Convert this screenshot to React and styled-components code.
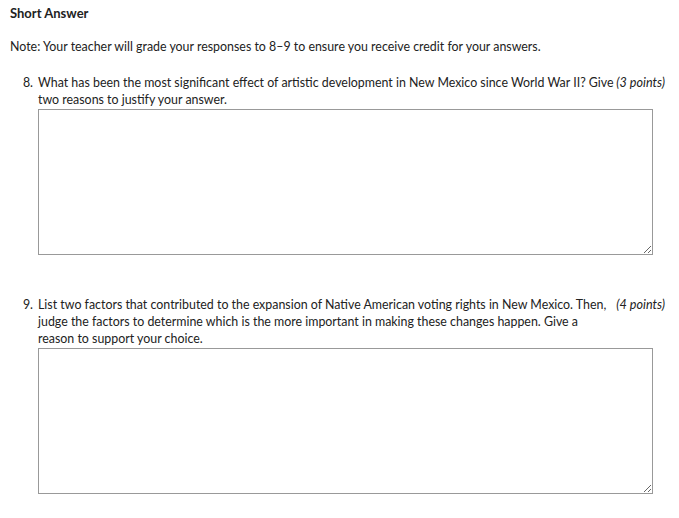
import styled, { createGlobalStyle } from 'styled-components'

const GlobalStyle = createGlobalStyle`
  body {
    margin: 0;
    background: #fff;
    font-family: Lato, "Open Sans", sans-serif;
    color: #222;
  }
`

const questions = [
  {
    num: 8,
    text: 'What has been the most significant effect of artistic development in New Mexico since World War II? Give two reasons to justify your answer.',
    points: 3,
  },
  {
    num: 9,
    text: 'List two factors that contributed to the expansion of Native American voting rights in New Mexico. Then, judge the factors to determine which is the more important in making these changes happen. Give a reason to support your choice.',
    points: 4,
  },
]

export default function App() {
  return (
    <>
      <GlobalStyle />
      <Page>
        <Title>Short Answer</Title>
        <Note>Note: Your teacher will grade your responses to 8–9 to ensure you receive credit for your answers.</Note>
        <List>
          {questions.map(q => (
            <Item key={q.num}>
              <Head>
                <Num>{q.num}.</Num>
                <Text>{q.text}</Text>
                <Points>({q.points} points)</Points>
              </Head>
              <Answer />
            </Item>
          ))}
        </List>
      </Page>
    </>
  )
}

const Page = styled.div`
  padding: 5px 10px 0 10px;
  font-size: 12.4px;
  line-height: 17px;
`

const Title = styled.div`
  font-weight: bold;
  font-size: 13px;
`

const Note = styled.div`
  margin-top: 16px;
`

const List = styled.div`
  display: flex;
  flex-direction: column;
  gap: 41px;
  margin-top: 19px;
`

const Item = styled.div`
  display: flex;
  flex-direction: column;
`

const Head = styled.div`
  display: flex;
  align-items: flex-start;
`

const Num = styled.div`
  width: 28px;
  text-align: right;
  padding-right: 5px;
  box-sizing: border-box;
  flex-shrink: 0;
`

const Text = styled.div`
  width: 576px;
  flex-shrink: 0;
`

const Points = styled.div`
  font-style: italic;
  font-size: 12.6px;
  margin-left: auto;
  padding-right: 4px;
  white-space: nowrap;
  flex-shrink: 0;
`

const Answer = styled.textarea`
  margin: 1px 0 0 28px;
  width: 615px;
  height: 146px;
  box-sizing: border-box;
  border: 1px solid #999;
  resize: vertical;
  font-family: inherit;
`
